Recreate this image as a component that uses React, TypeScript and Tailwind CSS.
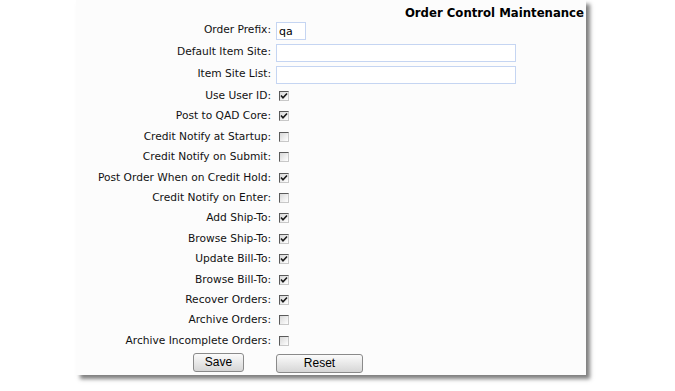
import React from 'react';

const inputRows = [
  { label: 'Order Prefix:', value: 'qa', width: 'w-[30px]' },
  { label: 'Default Item Site:', value: '', width: 'w-[240px]' },
  { label: 'Item Site List:', value: '', width: 'w-[240px]' },
];

const checkRows: { label: string; checked: boolean }[] = [
  { label: 'Use User ID:', checked: true },
  { label: 'Post to QAD Core:', checked: true },
  { label: 'Credit Notify at Startup:', checked: false },
  { label: 'Credit Notify on Submit:', checked: false },
  { label: 'Post Order When on Credit Hold:', checked: true },
  { label: 'Credit Notify on Enter:', checked: false },
  { label: 'Add Ship-To:', checked: true },
  { label: 'Browse Ship-To:', checked: true },
  { label: 'Update Bill-To:', checked: true },
  { label: 'Browse Bill-To:', checked: true },
  { label: 'Recover Orders:', checked: true },
  { label: 'Archive Orders:', checked: false },
  { label: 'Archive Incomplete Orders:', checked: false },
];

const Check: React.FC<{ checked: boolean }> = ({ checked }) => (
  <span className="mt-[5px] ml-[3px] flex h-[10px] w-[10px] items-center justify-center border border-t-[#5a5a5a] border-l-[#5a5a5a] border-b-[#c8c8c8] border-r-[#c8c8c8] bg-gradient-to-br from-[#d8d8d8] to-white">
    {checked && (
      <svg width="8" height="8" viewBox="0 0 8 8">
        <path d="M1 3.5 L3 5.8 L7 1.5" fill="none" stroke="#1a1a1a" strokeWidth="1.6" />
      </svg>
    )}
  </span>
);

const Label: React.FC<{ children: React.ReactNode }> = ({ children }) => (
  <div className="w-[196px] shrink-0 pr-[1px] text-right text-[10.65px] leading-none text-[#111]">{children}</div>
);

const App: React.FC = () => {
  return (
    <div className="min-h-screen bg-white font-['DejaVu_Sans',sans-serif]">
      <div className="ml-[76px] w-[510px] bg-[#fcfcfc] pb-[2px] shadow-[4px_4px_4px_rgba(0,0,0,0.5)]">
        {/* Title */}
        <div className="flex h-[20px] items-end justify-end pr-[2px]">
          <h1 className="pb-[1px] font-['DejaVu_Sans_Condensed','DejaVu_Sans',sans-serif] text-[13px] font-bold leading-none text-black [font-stretch:condensed]">
            Order Control Maintenance
          </h1>
        </div>

        {inputRows.map((r) => (
          <div key={r.label} className="flex h-[22px] items-center">
            <Label>
              <span className="relative -top-[1px]">{r.label}</span>
            </Label>
            <div className="pl-[4px]">
              <div
                className={`${r.width} flex h-[18px] items-center border border-[#c5d5f2] bg-white pl-[2px] text-[11px] leading-none text-black`}
              >
                {r.value}
              </div>
            </div>
          </div>
        ))}

        {checkRows.map((r) => (
          <div key={r.label} className="flex h-[20.4px] items-start">
            <Label>
              <span className="relative top-[5px]">{r.label}</span>
            </Label>
            <div className="pl-[4px]">
              <Check checked={r.checked} />
            </div>
          </div>
        ))}

        {/* Buttons */}
        <div className="flex h-[22px] items-center">
          <div className="flex w-[196px] shrink-0 justify-end pr-[28px]">
            <button className="h-[19px] w-[51px] rounded-[3px] border border-[#8a8a8a] bg-gradient-to-b from-[#fbfbfb] to-[#d6d6d6] font-['Liberation_Sans',Arial,sans-serif] text-[12px] leading-none text-black">
              Save
            </button>
          </div>
          <div className="pl-[4px]">
            <button className="h-[19px] w-[87px] rounded-[3px] border border-[#8a8a8a] bg-gradient-to-b from-[#fbfbfb] to-[#d6d6d6] font-['Liberation_Sans',Arial,sans-serif] text-[12px] leading-none text-black">
              Reset
            </button>
          </div>
        </div>
      </div>
    </div>
  );
};

export default App;
